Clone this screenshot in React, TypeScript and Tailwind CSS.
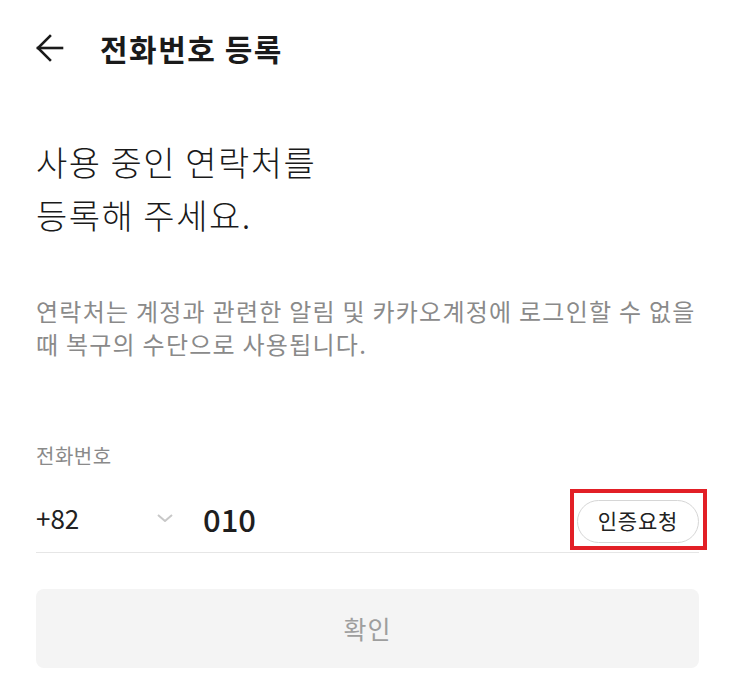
export default function App() {
  const font = { fontFamily: '"Noto Sans CJK KR", "Noto Sans", sans-serif' };
  return (
    <div className="w-[735px] h-[689px] bg-white overflow-hidden" style={font}>
      {/* header */}
      <header className="h-[96px] flex items-center pl-[35px]">
        <svg width="29" height="28" viewBox="0 0 29 28" fill="none" stroke="#1a1a1a" strokeWidth="2.6" strokeLinecap="square">
          <path d="M3 14H27" />
          <path d="M15 2L3 14L15 26" />
        </svg>
        <h1 className="ml-[36px] text-[30px] tracking-[1.5px] font-bold text-[#1a1a1a] leading-none">전화번호 등록</h1>
      </header>

      <section className="px-[36px]">
        <p className="mt-[39px] text-[34px] tracking-[1.5px] leading-[53px] font-light text-[#1a1a1a]">
          사용 중인 연락처를
          <br />
          등록해 주세요.
        </p>

        <p className="mt-[53px] text-[24px] tracking-[1.25px] leading-[33px] text-[#8a8a8a] whitespace-nowrap">
          연락처는 계정과 관련한 알림 및 카카오계정에 로그인할 수 없을
          <br />
          때 복구의 수단으로 사용됩니다.
        </p>

        <p className="mt-[84px] text-[20px] tracking-[0.5px] leading-[24px] text-[#8a8a8a]">전화번호</p>

        <div className="mt-[22px] h-[63px] flex items-center border-b border-[#e6e6e6]">
          <span className="w-[121px] text-[26px] text-[#222] -mt-[8px]">+82</span>
          <svg width="16" height="8" viewBox="0 0 16 8" fill="none" stroke="#c8c8c8" strokeWidth="2" className="-mt-[6px]">
            <path d="M1 1L8 7L15 1" />
          </svg>
          <span className="ml-[30px] text-[31px] font-medium text-[#1e1e1e] -mt-[4px]">010</span>
          <div className="ml-auto relative">
            <button className="h-[43px] w-[122px] rounded-full border border-[#d6d6d6] bg-white text-[21px] tracking-[0.8px] text-[#222] flex items-center justify-center">
              인증요청
            </button>
            <div className="absolute -left-[7px] -right-[8px] -top-[11px] -bottom-[7px] border-[4px] border-[#e21f26]" />
          </div>
        </div>

        <button className="mt-[36px] w-full h-[79px] rounded-[8px] bg-[#f4f4f4] text-[25px] tracking-[1px] text-[#9e9e9e]">
          확인
        </button>
      </section>
    </div>
  );
}
